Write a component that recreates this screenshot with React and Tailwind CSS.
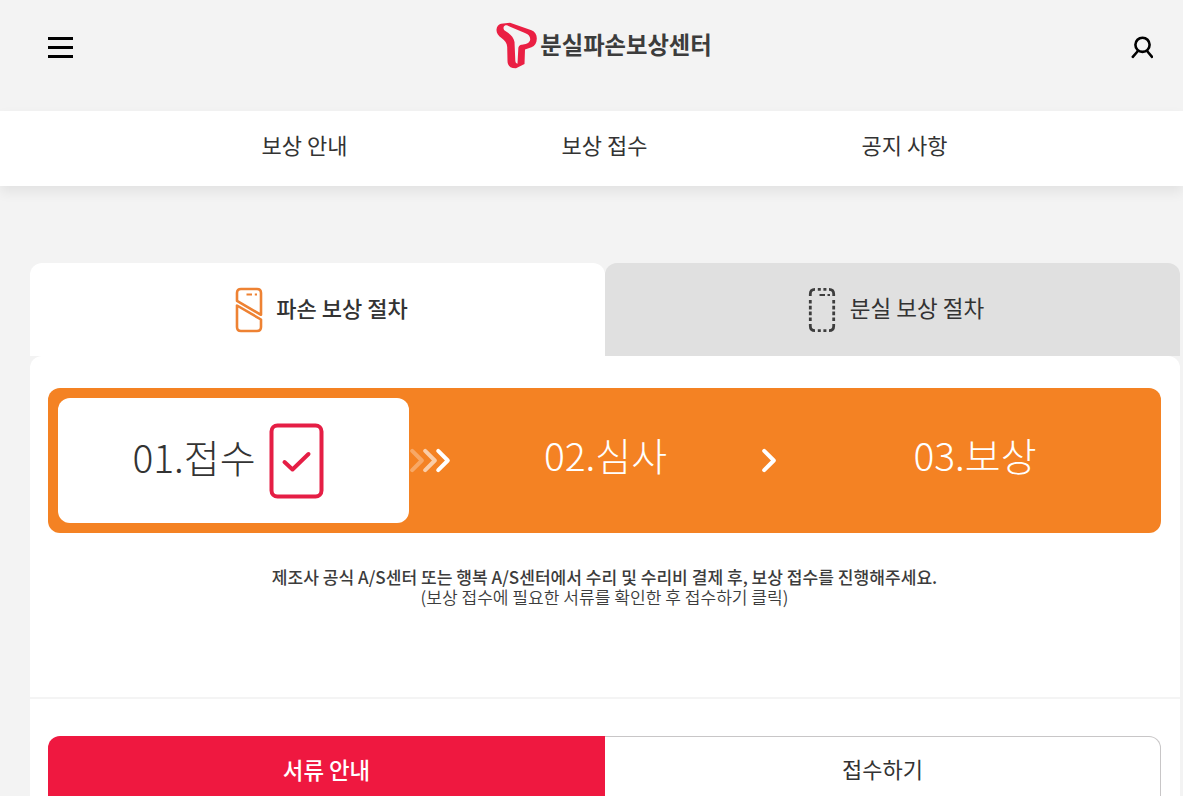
import React, { useState } from "react";

const menus = ["보상 안내", "보상 접수", "공지 사항"];

const Logo = () => (
  <a href="#" className="flex items-center text-[#3c3c3c]">
    <svg width="45" height="50" viewBox="0 0 45 50" fill="none">
      <path
        d="M6 2.800 L15 1.800 L36.500 9.300 C40 10.700 41.800 13.500 41.800 17.500 C41.800 22 40 25 36.500 26.200 L30 28.500 L29.500 43 L21 47.300 C15 47.500 12.500 44 12.500 40 L12.200 26 C12 22 10 19.500 6.500 17 C3 14.500 1.300 12 1.500 8.500 C1.700 5.500 3.500 3.400 6 2.800 Z"
        fill="#ea1f43"
      />
      <path
        d="M10 4.500 C8 5.500 8 8.500 10 9.800 C15 12.500 18.500 16 19.500 21 L20.300 39.500 C20.400 41.500 21 42.300 22.500 42.800 L23.300 27.500 C23.500 24.500 25.500 23.800 28 23.500 C32 23.200 35 21.500 35.200 18.300 C35.300 15.500 33.500 13.500 30.500 12.300 L14.500 5.500 C12.500 4.600 11.500 4 10 4.500 Z"
        fill="#f3f3f3"
      />
    </svg>
    <span className="pb-0.5 text-[23.300px] leading-none font-bold whitespace-nowrap">
      분실파손보상센터
    </span>
  </a>
);

const BrokenPhone = () => (
  <svg width="28" height="46" viewBox="0 0 28 46" fill="none" stroke="#ee8233" strokeWidth="2.600" strokeLinejoin="round">
    <path d="M2 13.800 V6 Q2 2 6 2 H22 Q26 2 26 6 V27.800 Z" />
    <path d="M2 18.500 V40 Q2 44 6 44 H22 Q26 44 26 40 V32.500 Z" />
    <path d="M11.500 7.500 H17 M19.800 7.500 H22" strokeWidth="2.200" />
  </svg>
);

const LostPhone = () => (
  <svg width="28" height="46" viewBox="0 0 28 46" fill="none" stroke="#3e3e3e" strokeWidth="2.800">
    <path d="M2.300 9 V7 Q2.300 2.400 7 2.400 M21 2.400 Q25.700 2.400 25.700 7 V9 M2.300 37 V39 Q2.300 43.600 7 43.600 M21 43.600 Q25.700 43.600 25.700 39 V37" />
    <path d="M9.800 2.400 H12.800 M15.400 2.400 H18.400 M9.800 43.600 H12.800 M15.400 43.600 H18.400" />
    <path d="M2.300 13 V34 M25.700 13 V34" strokeDasharray="3.600 2.200" />
    <path d="M11.500 7.900 H17 M19.500 7.900 H22" strokeWidth="2" />
  </svg>
);

const Chevron = ({ className }) => (
  <svg width="17" height="28" viewBox="0 0 17 28" className={className} fill="none" stroke="currentColor" strokeWidth="4" strokeLinecap="round" strokeLinejoin="round">
    <path d="M4.200 3.800 L13.800 13.500 L4.200 23.200" />
  </svg>
);

const App = () => {
  const [tab, setTab] = useState("broken");

  return (
    <div className="h-screen overflow-hidden bg-[#f3f3f3] text-[#333] font-['Noto_Sans_CJK_KR',sans-serif]">
      <header className="flex h-[111px] items-start justify-between pl-12 pr-[30px]">
        <button className="mt-[37px] flex w-[25px] flex-col gap-[6.500px]" aria-label="menu">
          <span className="h-[2.500px] w-full bg-black" />
          <span className="h-[2.500px] w-full bg-black" />
          <span className="h-[2.500px] w-full bg-black" />
        </button>
        <div className="mt-[21px] ml-[7px]">
          <Logo />
        </div>
        <button className="mt-9" aria-label="login">
          <svg width="26" height="24" viewBox="0 0 26 24" fill="none" stroke="#000" strokeWidth="2.600" strokeLinecap="round">
            <circle cx="15.500" cy="8.800" r="7.100" />
            <path d="M10.500 15.500 L5.800 20.800 M20.500 15.500 L25 20.800" />
          </svg>
        </button>
      </header>

      <nav className="flex h-[75px] justify-center bg-white pl-[26px] shadow-[0_6px_12px_rgba(0,0,0,0.07)]">
        {menus.map((menu) => (
          <a key={menu} href="#" className="w-[300px] pt-[17px] text-center text-[22px] leading-8">
            {menu}
          </a>
        ))}
      </nav>

      <main className="ml-[30px] w-[1150px] pt-[77px]">
        <div className="flex h-[93px]">
          <button
            onClick={() => setTab("broken")}
            className={`flex w-1/2 items-center justify-center gap-[13px] rounded-t-xl pt-px pl-2 ${
              tab === "broken" ? "bg-white font-medium" : "bg-[#e0e0e0]"
            }`}
          >
            <BrokenPhone />
            <span className="pb-1.5 text-[22px] leading-8">파손 보상 절차</span>
          </button>
          <button
            onClick={() => setTab("lost")}
            className={`flex w-1/2 items-center justify-center gap-[14px] rounded-t-xl pt-px pl-[7px] ${
              tab === "lost" ? "bg-white font-medium" : "bg-[#e0e0e0]"
            }`}
          >
            <LostPhone />
            <span className="pb-1.5 text-[22.500px] leading-8">분실 보상 절차</span>
          </button>
        </div>

        <section className="rounded-t-xl bg-white pt-8 pr-[19px] pl-[18px]">
          <div className="flex h-[145px] items-center rounded-xl bg-[#f48223] text-[39px] font-light text-white">
            <div className="ml-[10px] flex h-[125px] w-[351px] items-center justify-center gap-[13px] rounded-xl bg-white pr-[11px] text-[#333]">
              <span className="pb-2 leading-none">01.접수</span>
              <svg width="55" height="76" viewBox="0 0 55 76" fill="none" stroke="#e51e45" strokeWidth="4">
                <rect x="2.500" y="2.500" width="50" height="71" rx="6" />
                <path d="M15.500 39 L23.500 46.500 L39.500 31" strokeLinecap="round" strokeLinejoin="round" />
              </svg>
            </div>
            <div className="flex w-[42px]">
              <Chevron className="-ml-px opacity-30" />
              <Chevron className="-ml-1 opacity-60" />
              <Chevron className="-ml-1" />
            </div>
            <div className="w-[309px] pb-3 text-center leading-none">02.심사</div>
            <Chevron />
            <div className="flex-1 pb-3 pl-3 text-center leading-none">03.보상</div>
          </div>

          <div className="h-[164px] pt-[34px] text-center text-[17.080px] leading-5 text-[#3c3c3c]">
            <p className="font-medium whitespace-nowrap">
              제조사 공식 A/S센터 또는 행복 A/S센터에서 수리 및 수리비 결제 후, 보상 접수를 진행해주세요.
            </p>
            <p className="font-[350]">(보상 접수에 필요한 서류를 확인한 후 접수하기 클릭)</p>
          </div>

          <div className="-mr-[19px] -ml-[18px] h-[2px] bg-[#f4f4f4]" />

          <div className="mt-[37px] flex h-[70px] text-[22px] leading-8">
            <button className="w-[557px] rounded-tl-xl bg-[#ef1840] pb-1 text-[22.400px] font-medium text-white">서류 안내</button>
            <button className="flex-1 rounded-tr-xl border border-l-0 border-[#c8c6c7] pb-1.5">접수하기</button>
          </div>
        </section>
      </main>
    </div>
  );
};

export default App;
